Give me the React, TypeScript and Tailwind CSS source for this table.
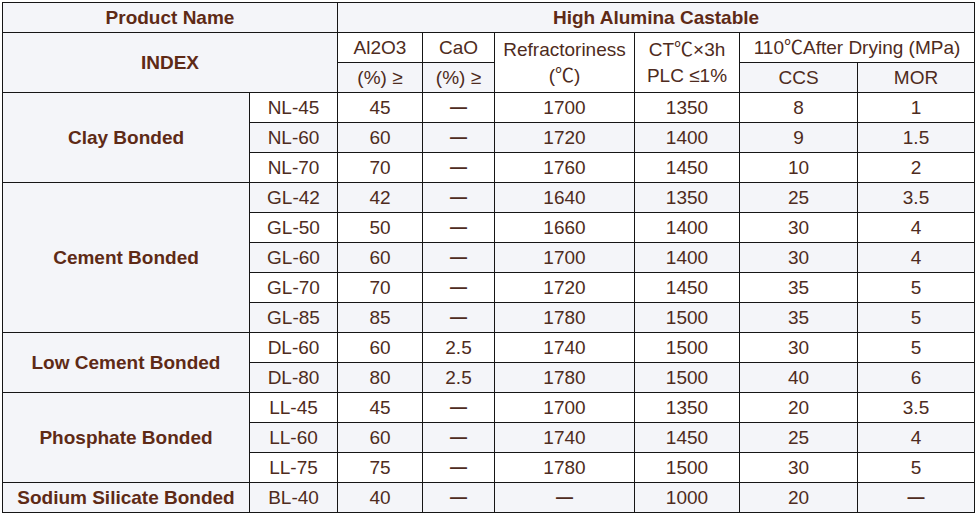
import React from "react";

type Row = { model: string; al: string; cao: string; refr: string; ct: string; ccs: string; mor: string };
type Group = { name: string; rows: Row[] };

const D = "—";

const groups: Group[] = [
  {
    name: "Clay Bonded",
    rows: [
      { model: "NL-45", al: "45", cao: D, refr: "1700", ct: "1350", ccs: "8", mor: "1" },
      { model: "NL-60", al: "60", cao: D, refr: "1720", ct: "1400", ccs: "9", mor: "1.5" },
      { model: "NL-70", al: "70", cao: D, refr: "1760", ct: "1450", ccs: "10", mor: "2" },
    ],
  },
  {
    name: "Cement Bonded",
    rows: [
      { model: "GL-42", al: "42", cao: D, refr: "1640", ct: "1350", ccs: "25", mor: "3.5" },
      { model: "GL-50", al: "50", cao: D, refr: "1660", ct: "1400", ccs: "30", mor: "4" },
      { model: "GL-60", al: "60", cao: D, refr: "1700", ct: "1400", ccs: "30", mor: "4" },
      { model: "GL-70", al: "70", cao: D, refr: "1720", ct: "1450", ccs: "35", mor: "5" },
      { model: "GL-85", al: "85", cao: D, refr: "1780", ct: "1500", ccs: "35", mor: "5" },
    ],
  },
  {
    name: "Low Cement Bonded",
    rows: [
      { model: "DL-60", al: "60", cao: "2.5", refr: "1740", ct: "1500", ccs: "30", mor: "5" },
      { model: "DL-80", al: "80", cao: "2.5", refr: "1780", ct: "1500", ccs: "40", mor: "6" },
    ],
  },
  {
    name: "Phosphate Bonded",
    rows: [
      { model: "LL-45", al: "45", cao: D, refr: "1700", ct: "1350", ccs: "20", mor: "3.5" },
      { model: "LL-60", al: "60", cao: D, refr: "1740", ct: "1450", ccs: "25", mor: "4" },
      { model: "LL-75", al: "75", cao: D, refr: "1780", ct: "1500", ccs: "30", mor: "5" },
    ],
  },
  {
    name: "Sodium Silicate Bonded",
    rows: [{ model: "BL-40", al: "40", cao: D, refr: D, ct: "1000", ccs: "20", mor: D }],
  },
];

const cell = "border border-[#161616] text-center align-middle p-0 whitespace-nowrap";
const bold = "font-bold text-[#5e2a16]";
const reg = "text-[#4e2b20]";
const gray = "bg-[#f4f5f9]";
const white = "bg-white";

function V({ v }: { v: string }) {
  if (v === D) return <span className="font-bold text-[17px]">{D}</span>;
  return <>{v}</>;
}

export default function App() {
  let idx = 0;
  return (
    <div
      className="w-[976px] h-[516px] bg-white pt-[2px] pl-[2px] overflow-hidden"
      style={{ fontFamily: "'Liberation Sans', Arial, 'Noto Sans CJK SC', sans-serif" }}
    >
      <table className="table-fixed border-collapse w-[972px] text-[19px] leading-[22px]">
        <colgroup>
          <col className="w-[247px]" />
          <col className="w-[88px]" />
          <col className="w-[85px]" />
          <col className="w-[72px]" />
          <col className="w-[140px]" />
          <col className="w-[105px]" />
          <col className="w-[118px]" />
          <col className="w-[117px]" />
        </colgroup>
        <tbody>
          <tr className="h-[30px]">
            <td colSpan={2} className={`${cell} ${bold} ${gray}`}>Product Name</td>
            <td colSpan={6} className={`${cell} ${bold} ${gray}`}>High Alumina Castable</td>
          </tr>
          <tr className="h-[30px]">
            <td colSpan={2} rowSpan={2} className={`${cell} ${bold} ${gray}`}>INDEX</td>
            <td className={`${cell} ${reg} ${white}`}>Al2O3</td>
            <td className={`${cell} ${reg} ${white}`}>CaO</td>
            <td rowSpan={2} className={`${cell} ${reg} ${white} leading-[26px]`}>
              Refractoriness
              <br />
              (℃)
            </td>
            <td rowSpan={2} className={`${cell} ${reg} ${white} leading-[26px]`}>
              CT℃×3h
              <br />
              PLC ≤1%
            </td>
            <td colSpan={2} className={`${cell} ${reg} ${white}`}>110℃After Drying (MPa)</td>
          </tr>
          <tr className="h-[30px]">
            <td className={`${cell} ${reg} ${gray}`}>(%) ≥</td>
            <td className={`${cell} ${reg} ${gray}`}>(%) ≥</td>
            <td className={`${cell} ${reg} ${gray}`}>CCS</td>
            <td className={`${cell} ${reg} ${gray}`}>MOR</td>
          </tr>
          {groups.map((g) =>
            g.rows.map((r, i) => {
              const bg = idx % 2 === 1 ? gray : white;
              idx++;
              return (
                <tr key={r.model} className="h-[30px]">
                  {i === 0 && (
                    <td rowSpan={g.rows.length} className={`${cell} ${bold} ${gray}`}>
                      {g.name}
                    </td>
                  )}
                  <td className={`${cell} ${reg} ${bg}`}>{r.model}</td>
                  <td className={`${cell} ${reg} ${bg}`}>{r.al}</td>
                  <td className={`${cell} ${reg} ${bg}`}><V v={r.cao} /></td>
                  <td className={`${cell} ${reg} ${bg}`}><V v={r.refr} /></td>
                  <td className={`${cell} ${reg} ${bg}`}>{r.ct}</td>
                  <td className={`${cell} ${reg} ${bg}`}>{r.ccs}</td>
                  <td className={`${cell} ${reg} ${bg}`}><V v={r.mor} /></td>
                </tr>
              );
            })
          )}
        </tbody>
      </table>
    </div>
  );
}
